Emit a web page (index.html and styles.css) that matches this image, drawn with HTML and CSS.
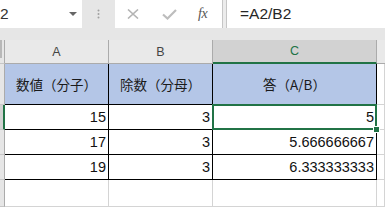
FILE: index.html
```html
<!DOCTYPE html>
<html lang="ja">
<head>
<meta charset="utf-8">
<link rel="stylesheet" href="styles.css">
</head>
<body>
<div class="app">
  <div class="fbar">
    <div class="namebox"><span class="nb-text">2</span><span class="nb-drop"></span></div>
    <div class="splitter">
      <svg width="3" height="10" viewBox="0 0 3 10"><circle cx="1.5" cy="1.5" r="1" fill="#a0a0a0"/><circle cx="1.5" cy="5" r="1" fill="#a0a0a0"/><circle cx="1.5" cy="8.5" r="1" fill="#a0a0a0"/></svg>
    </div>
    <div class="fnbox">
      <svg class="ic-x" width="12" height="10" viewBox="0 0 12 10"><path d="M1 0.5 L11 9.5 M11 0.5 L1 9.5" stroke="#b4b4b4" stroke-width="1.6" fill="none"/></svg>
      <svg class="ic-ok" width="15" height="11" viewBox="0 0 15 11"><path d="M1 5.5 L5.5 9.5 L14 1" stroke="#bdbdbd" stroke-width="2.2" fill="none"/></svg>
      <span class="fx">fx</span>
    </div>
    <div class="fgap"></div>
    <div class="formula">=A2/B2</div>
  </div>
  <div class="fspace"></div>
  <div class="sheet">
    <div class="c rh corner"></div>
    <div class="c ch">A</div>
    <div class="c ch">B</div>
    <div class="c ch sel">C</div>
    <div class="c ch last"></div>

    <div class="c rh"></div>
    <div class="c hd">数値（分子）</div>
    <div class="c hd">除数（分母）</div>
    <div class="c hd">答（A/B）</div>
    <div class="c gd"></div>

    <div class="c rh rsel"></div>
    <div class="c num">15</div>
    <div class="c num">3</div>
    <div class="c num active">5<span class="handle"></span></div>
    <div class="c gd"></div>

    <div class="c rh"></div>
    <div class="c num">17</div>
    <div class="c num">3</div>
    <div class="c num">5.666666667</div>
    <div class="c gd"></div>

    <div class="c rh"></div>
    <div class="c num">19</div>
    <div class="c num">3</div>
    <div class="c num">6.333333333</div>
    <div class="c gd"></div>

    <div class="c rh"></div>
    <div class="c empty"></div>
    <div class="c empty"></div>
    <div class="c empty"></div>
    <div class="c empty"></div>
  </div>
</div>
</body>
</html>
```

FILE: styles.css
```css
html, body {
  margin: 0;
  padding: 0;
}
body {
  width: 385px;
  height: 207px;
  overflow: hidden;
  background: #e6e6e6;
  font-family: "Liberation Sans", Arial, sans-serif;
}
.app {
  width: 385px;
  height: 207px;
  display: flex;
  flex-direction: column;
}
.fbar {
  display: flex;
  height: 28px;
}
.namebox {
  width: 82px;
  background: #fff;
  display: flex;
  align-items: center;
  overflow: hidden;
}
.nb-text {
  font-size: 15.5px;
  color: #333;
  margin-left: 0;
}
.nb-drop {
  margin-left: auto;
  margin-right: 5px;
  width: 0;
  height: 0;
  border-left: 4px solid transparent;
  border-right: 4px solid transparent;
  border-top: 4px solid #666;
}
.splitter {
  width: 33px;
  display: flex;
  align-items: center;
  justify-content: center;
}
.fnbox {
  width: 107px;
  background: #fff;
  display: flex;
  align-items: center;
}
.ic-x {
  margin-left: 12px;
}
.ic-ok {
  margin-left: 23px;
}
.fx {
  margin-left: 21px;
  font-family: "Liberation Serif", serif;
  font-style: italic;
  font-size: 14px;
  color: #555;
  letter-spacing: -0.5px;
}
.fgap {
  width: 3px;
  border-left: 1px solid #c6c6c6;
  border-right: 1px solid #c6c6c6;
  background: #ececec;
}
.formula {
  flex: 1;
  background: #fff;
  padding-left: 13px;
  display: flex;
  align-items: center;
  font-size: 15.5px;
  color: #262626;
}
.fspace {
  height: 12px;
}
.sheet {
  flex: 1;
  display: grid;
  grid-template-columns: 5px 104px 104px 164px 8px;
  grid-template-rows: 24px 41px 25px 25px 25px 27px;
  background: #fff;
}
.c {
  box-sizing: border-box;
  border-right: 1px solid #d4d4d4;
  border-bottom: 1px solid #d4d4d4;
  display: flex;
  align-items: center;
  position: relative;
  min-width: 0;
}
.rh {
  background: #e6e6e6;
  border-right: 1px solid #ababab;
  border-bottom: 1px solid #c6c6c6;
}
.corner::before {
  content: "";
  position: absolute;
  left: 0;
  top: 0;
  width: 2px;
  height: 18px;
  background: #b8b8b8;
}
.rsel {
  background: #d2d2d2;
  border-right: 2px solid #217346;
}
.ch {
  background: #e9e9e9;
  border-right: 1px solid #ababab;
  border-bottom: 1px solid #ababab;
  justify-content: center;
  font-size: 12.5px;
  color: #444;
}
.ch.sel {
  background: #d2d2d2;
  color: #217346;
  border-bottom: 2px solid #217346;
}
.ch.last {
  border-right: none;
}
.hd {
  background: #b4c6e7;
  border-right: 1px solid #000;
  border-bottom: 1px solid #000;
  justify-content: center;
  font-family: "Noto Sans CJK JP", "Liberation Sans", sans-serif;
  font-size: 13.5px;
  color: #1a1a1a;
}
.num {
  border-right: 1px solid #000;
  border-bottom: 1px solid #000;
  justify-content: flex-end;
  padding-right: 2px;
  font-size: 14.5px;
  color: #111;
}
.active::after {
  content: "";
  position: absolute;
  left: -1px;
  top: -1px;
  right: -1px;
  bottom: -1px;
  border: 2px solid #217346;
}
.handle {
  position: absolute;
  right: -4px;
  bottom: -4px;
  width: 5px;
  height: 5px;
  background: #217346;
  border: 1px solid #fff;
  z-index: 2;
}
.gd {
  border-right: 1px solid #d4d4d4;
}
.empty {
  border-right: 1px solid #d4d4d4;
}
```
